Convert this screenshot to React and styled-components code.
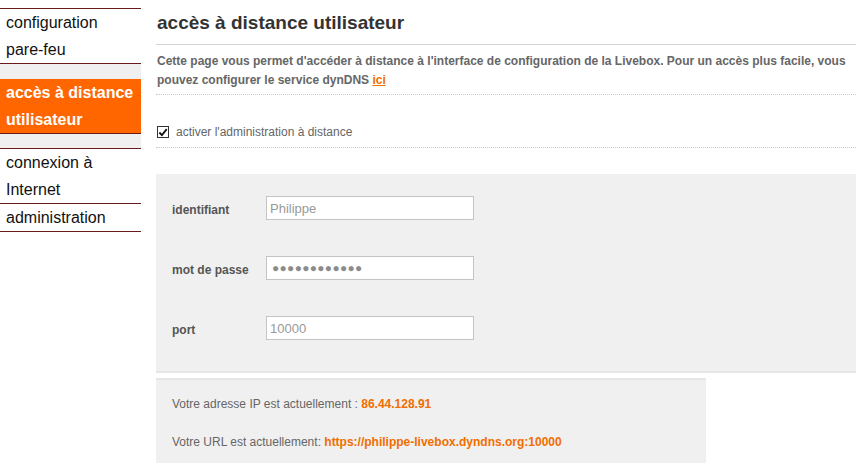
import React from "react";
import styled, { createGlobalStyle } from "styled-components";

const Global = createGlobalStyle`
  html, body { margin: 0; padding: 0; background: #fff; }
  body { font-family: Arial, "Liberation Sans", sans-serif; }
  * { box-sizing: border-box; }
`;

const Page = styled.div`
  display: flex;
  align-items: flex-start;
  width: 863px;
  height: 463px;
  overflow: hidden;
`;

const Sidebar = styled.nav`
  width: 141px;
  margin-top: 8px;
  border-top: 1px solid #6a1c1c;
  display: flex;
  flex-direction: column;
`;

const NavItem = styled.a`
  display: block;
  padding: 0 6px;
  font-size: 16px;
  line-height: 27px;
  color: ${(p) => (p.$active ? "#fff" : "#111")};
  background: ${(p) => (p.$active ? "#ff6600" : "transparent")};
  font-weight: ${(p) => (p.$active ? "bold" : "normal")};
  border-bottom: 1px solid #6a1c1c;
  text-decoration: none;
`;

const ActiveGroup = styled.div`
  background: #f0f0f0;
  padding: 15px 0 14px;
  border-bottom: 1px solid #6a1c1c;
`;

const Main = styled.main`
  margin-left: 15px;
  width: 700px;
  padding-top: 12px;
`;

const Title = styled.h1`
  margin: 0;
  font-size: 19px;
  line-height: 22px;
  font-weight: bold;
  color: #333;
  padding: 0 1px 10px;
  border-bottom: 1px solid #d4d4d4;
`;

const Intro = styled.p`
  margin: 7px 0 0;
  padding: 0 1px 4px;
  font-size: 12px;
  line-height: 19px;
  font-weight: bold;
  color: #666;
  border-bottom: 1px dotted #d6c6b4;
`;

const Link = styled.a`
  color: #f16e00;
  text-decoration: underline;
`;

const CheckRow = styled.label`
  display: flex;
  align-items: center;
  gap: 7px;
  margin-top: 27px;
  height: 20px;
  padding: 0 1px;
  font-size: 12px;
  color: #666;
  box-sizing: content-box;
  padding-bottom: 5px;
  border-bottom: 1px dotted #d6c6b4;
`;

const Box = styled.span`
  width: 12px;
  height: 12px;
  border: 1px solid #333;
  background: #fff;
  display: flex;
  align-items: center;
  justify-content: center;
`;

const FormPanel = styled.section`
  margin-top: 26px;
  background: #f0f0f0;
  padding: 22px 16px 31px;
  border-bottom: 2px solid #e6e6e6;
  display: grid;
  grid-template-columns: 94px 208px;
  row-gap: 36px;
  align-items: center;
`;

const FieldLabel = styled.span`
  font-size: 12px;
  font-weight: bold;
  color: #555;
  padding-top: 4px;
`;

const Field = styled.div`
  height: 24px;
  border: 1px solid #c4c4c4;
  background: #fff;
  padding-left: 3px;
  display: flex;
  align-items: center;
  font-size: 13px;
  color: #999;
`;

const Dots = styled.span`
  font-size: 12px;
  letter-spacing: 0.3px;
  color: #8c8c8c;
  padding-left: 2px;
`;

const InfoPanel = styled.section`
  margin-top: 5px;
  width: 550px;
  background: #f0f0f0;
  border-top: 2px solid #e6e6e6;
  padding: 15px 16px 20px;
`;

const InfoLine = styled.p`
  margin: 0 0 20px;
  font-size: 12px;
  line-height: 18px;
  color: #666;
`;

const Value = styled.span`
  color: #f16e00;
  font-weight: bold;
`;

export default function App() {
  return (
    <>
      <Global />
      <Page>
        <Sidebar>
          <NavItem href="#">configuration<br />pare-feu</NavItem>
          <ActiveGroup>
            <NavItem href="#" $active>accès à distance<br />utilisateur</NavItem>
          </ActiveGroup>
          <NavItem href="#">connexion à<br />Internet</NavItem>
          <NavItem href="#">administration</NavItem>
        </Sidebar>
        <Main>
          <Title>accès à distance utilisateur</Title>
          <Intro>
            Cette page vous permet d'accéder à distance à l'interface de configuration de la Livebox. Pour un accès plus facile, vous pouvez configurer le service dynDNS <Link href="#">ici</Link>
          </Intro>
          <CheckRow>
            <Box>
              <svg width="11" height="11" viewBox="0 0 11 11">
                <path d="M1.5 5.5 L4.3 8.3 L9.6 1.8" fill="none" stroke="#111" strokeWidth="2" />
              </svg>
            </Box>
            activer l'administration à distance
          </CheckRow>
          <FormPanel>
            <FieldLabel>identifiant</FieldLabel>
            <Field>Philippe</Field>
            <FieldLabel>mot de passe</FieldLabel>
            <Field><Dots>●●●●●●●●●●●●</Dots></Field>
            <FieldLabel>port</FieldLabel>
            <Field>10000</Field>
          </FormPanel>
          <InfoPanel>
            <InfoLine>Votre adresse IP est actuellement : <Value>86.44.128.91</Value></InfoLine>
            <InfoLine>Votre URL est actuellement: <Value>https://philippe-livebox.dyndns.org:10000</Value></InfoLine>
          </InfoPanel>
        </Main>
      </Page>
    </>
  );
}
